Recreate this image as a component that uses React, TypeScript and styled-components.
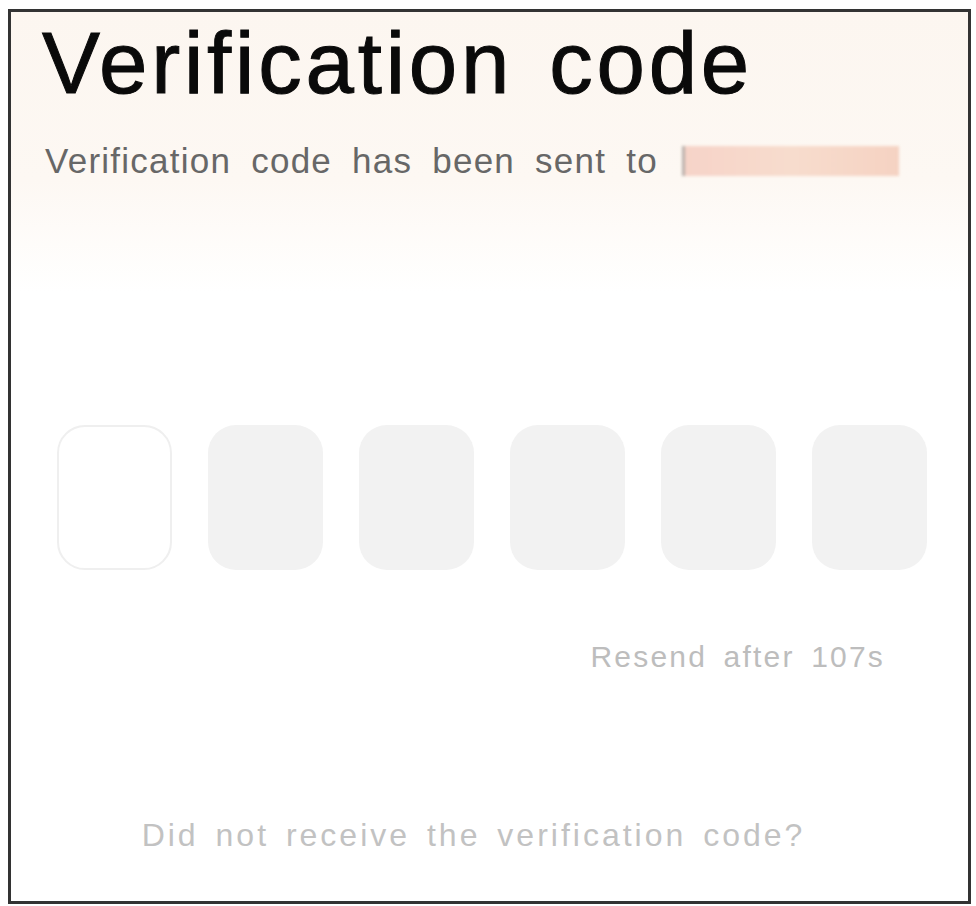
import styled, { createGlobalStyle } from 'styled-components';

const GlobalStyle = createGlobalStyle`
  html, body {
    margin: 0;
    padding: 0;
    background: #ffffff;
  }
  body {
    font-family: 'Liberation Sans', Arial, sans-serif;
  }
`;

const Frame = styled.div`
  box-sizing: border-box;
  margin: 9px 5px 0 8px;
  height: 895px;
  border: 3px solid #333333;
  background: #ffffff;
  display: flex;
  flex-direction: column;
  overflow: hidden;
`;

const Header = styled.header`
  height: 280px;
  padding: 7px 0 0 31px;
  box-sizing: border-box;
  background: linear-gradient(180deg, #fcf6f0 0%, #fdf8f3 60%, #ffffff 100%);
`;

const Title = styled.h1`
  margin: 0;
  font-size: 87px;
  line-height: 1;
  font-weight: 400;
  color: #0a0a0a;
  letter-spacing: 3.8px;
  word-spacing: 8px;
  -webkit-text-stroke: 1px #0a0a0a;
`;

const Subtitle = styled.p`
  margin: 37px 0 0 3px;
  font-size: 35px;
  line-height: 1;
  color: #676767;
  letter-spacing: 1.25px;
  word-spacing: 9px;
  display: flex;
  align-items: center;
`;

const Masked = styled.span`
  display: inline-block;
  width: 214px;
  height: 30px;
  margin-left: 24px;
  border-left: 3px solid #b9b0ab;
  background: linear-gradient(90deg, #f6d3c8 0%, #f7dccd 50%, #f5d2c2 100%);
  filter: blur(1.5px);
`;

const Body = styled.section`
  flex: 1;
  padding: 133px 42px 0 46px;
  display: flex;
  flex-direction: column;
`;

const CodeRow = styled.div`
  display: grid;
  grid-template-columns: repeat(6, 115px);
  column-gap: 36px;
`;

const Cell = styled.div<{ $active?: boolean }>`
  height: 145px;
  border-radius: 28px;
  box-sizing: border-box;
  background: ${(p) => (p.$active ? '#ffffff' : '#f2f2f2')};
  border: ${(p) => (p.$active ? '2px solid #efefef' : 'none')};
`;

const Resend = styled.div`
  margin: 72px 41px 0 0;
  align-self: flex-end;
  font-size: 30px;
  line-height: 1;
  color: #bdbdbd;
  letter-spacing: 2.2px;
  word-spacing: 6px;
`;

const Help = styled.div`
  margin-top: 147px;
  padding-right: 36px;
  text-align: center;
  font-size: 32px;
  line-height: 1;
  color: #c2c2c2;
  letter-spacing: 3px;
  word-spacing: 5px;
`;

export default function App() {
  const cells = [0, 1, 2, 3, 4, 5];
  return (
    <>
      <GlobalStyle />
      <Frame>
        <Header>
          <Title>Verification code</Title>
          <Subtitle>
            Verification code has been sent to
            <Masked />
          </Subtitle>
        </Header>
        <Body>
          <CodeRow>
            {cells.map((i) => (
              <Cell key={i} $active={i === 0} />
            ))}
          </CodeRow>
          <Resend>Resend after 107s</Resend>
          <Help>Did not receive the verification code?</Help>
        </Body>
      </Frame>
    </>
  );
}
